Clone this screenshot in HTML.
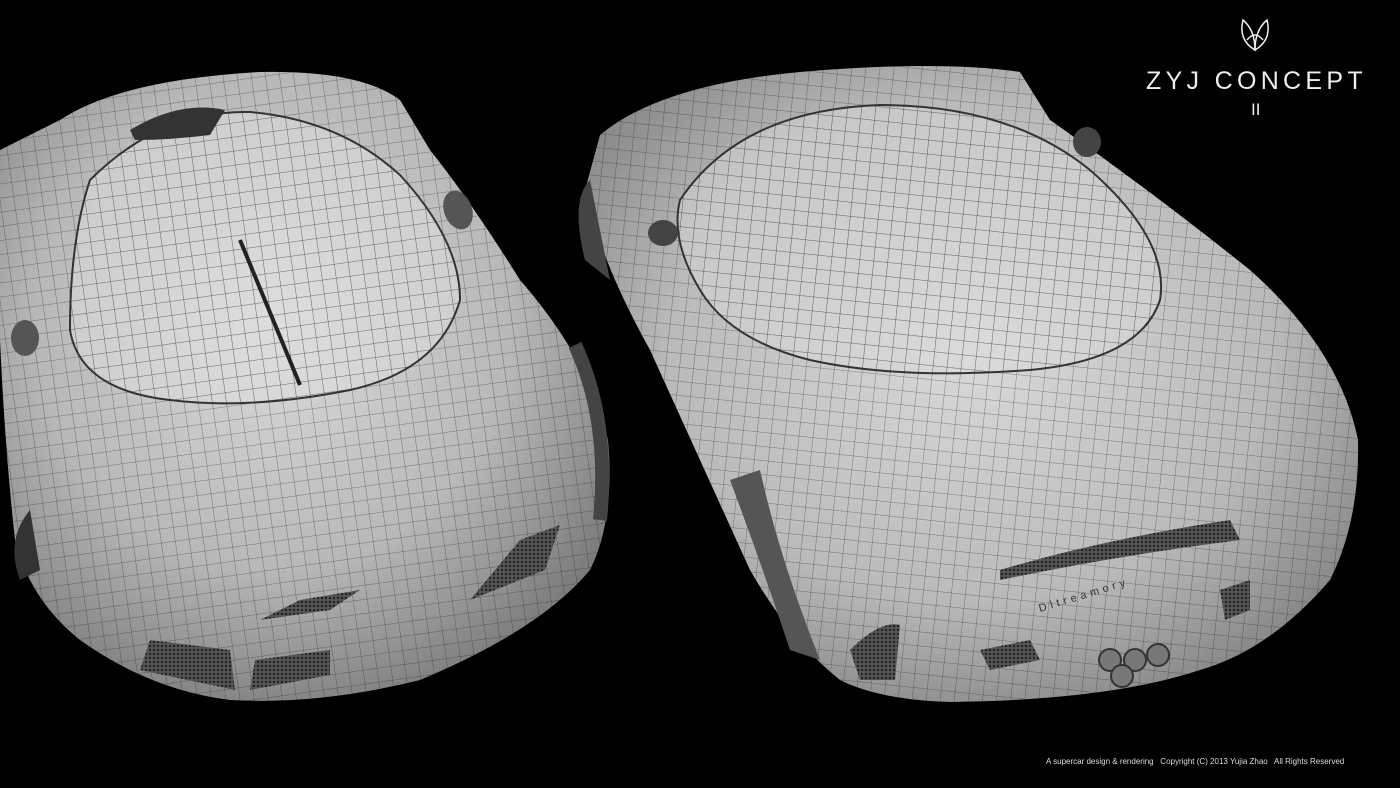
<!DOCTYPE html>
<html><head><meta charset="utf-8"><style>
html,body{margin:0;padding:0;background:#000;}
body{width:1400px;height:788px;overflow:hidden;position:relative;font-family:"Liberation Sans",sans-serif;}
svg{position:absolute;left:0;top:0;}
.t{position:absolute;color:#eee;font-family:"Liberation Sans",sans-serif;font-weight:normal;}
</style></head><body>
<svg width="1400" height="788" viewBox="0 0 1400 788">
<defs>
<pattern id="g" width="14" height="14" patternUnits="userSpaceOnUse" patternTransform="rotate(-8)">
<path d="M0 0H14M0 0V14" stroke="#222" stroke-width="0.8" fill="none" opacity="0.6"/>
</pattern>
<pattern id="g2" width="14" height="14" patternUnits="userSpaceOnUse" patternTransform="rotate(6)">
<path d="M0 0H14M0 0V14" stroke="#222" stroke-width="0.8" fill="none" opacity="0.6"/>
</pattern>
<pattern id="mesh" width="4" height="4" patternUnits="userSpaceOnUse">
<rect width="4" height="4" fill="#555"/><circle cx="2" cy="2" r="1.2" fill="#222"/>
</pattern>
<radialGradient id="s1" cx="0.45" cy="0.4" r="0.65">
<stop offset="0" stop-color="#dcdcdc"/><stop offset="0.6" stop-color="#b8b8b8"/><stop offset="1" stop-color="#7a7a7a"/>
</radialGradient>
<radialGradient id="s2" cx="0.5" cy="0.45" r="0.65">
<stop offset="0" stop-color="#dadada"/><stop offset="0.6" stop-color="#bababa"/><stop offset="1" stop-color="#7a7a7a"/>
</radialGradient>
</defs>
<!-- left car -->
<path d="M0 150 L60 120 Q120 80 260 72 Q360 70 400 100 L430 150 Q470 200 520 280 Q590 360 608 440 Q615 520 590 570 Q540 630 420 680 Q320 705 230 700 Q150 690 80 640 Q30 600 15 540 Q5 450 0 340 Z" fill="url(#s1)"/>
<path d="M0 150 L60 120 Q120 80 260 72 Q360 70 400 100 L430 150 Q470 200 520 280 Q590 360 608 440 Q615 520 590 570 Q540 630 420 680 Q320 705 230 700 Q150 690 80 640 Q30 600 15 540 Q5 450 0 340 Z" fill="url(#g)"/>
<path d="M90 180 Q160 110 250 112 Q340 120 400 175 Q460 240 460 300 Q440 370 350 390 Q250 410 170 400 Q80 390 70 330 Q70 240 90 180Z" fill="#e0e0e0" opacity="0.5"/>
<path d="M90 180 Q160 110 250 112 Q340 120 400 175 Q460 240 460 300 Q440 370 350 390 Q250 410 170 400 Q80 390 70 330 Q70 240 90 180Z" fill="url(#g)" stroke="#333" stroke-width="2"/>
<path d="M240 240 L300 385" stroke="#222" stroke-width="4"/>
<path d="M130 130 Q180 100 225 110 L210 135 Q170 140 135 140Z" fill="#333"/>
<path d="M140 670 L150 640 L230 650 L235 690Z M250 690 L255 660 L330 650 L330 675Z M470 600 L520 540 L560 525 L545 570Z M260 620 L300 600 L360 590 L330 610Z" fill="url(#mesh)"/>
<path d="M30 510 Q5 540 20 580 L40 570Z" fill="#333"/>
<ellipse cx="458" cy="210" rx="14" ry="20" fill="#555" transform="rotate(-20 458 210)"/>
<ellipse cx="25" cy="338" rx="14" ry="18" fill="#555"/>
<path d="M575 345 Q610 420 600 520" stroke="#444" stroke-width="14" fill="none"/>
<!-- right car -->
<path d="M600 135 Q660 85 800 72 Q940 60 1020 72 L1050 120 Q1150 190 1250 270 Q1340 350 1358 440 Q1360 520 1330 580 Q1270 650 1200 670 Q1110 700 950 702 Q880 700 840 680 Q790 640 750 570 Q700 460 650 350 Q600 260 585 190 Z" fill="url(#s2)"/>
<path d="M600 135 Q660 85 800 72 Q940 60 1020 72 L1050 120 Q1150 190 1250 270 Q1340 350 1358 440 Q1360 520 1330 580 Q1270 650 1200 670 Q1110 700 950 702 Q880 700 840 680 Q790 640 750 570 Q700 460 650 350 Q600 260 585 190 Z" fill="url(#g2)"/>
<path d="M680 200 Q740 110 880 105 Q1010 105 1090 170 Q1170 240 1160 300 Q1140 360 1030 370 Q900 380 810 360 Q730 340 700 290 Q670 240 680 200Z" fill="#dcdcdc" opacity="0.45"/>
<path d="M680 200 Q740 110 880 105 Q1010 105 1090 170 Q1170 240 1160 300 Q1140 360 1030 370 Q900 380 810 360 Q730 340 700 290 Q670 240 680 200Z" fill="url(#g2)" stroke="#333" stroke-width="2"/>
<path d="M590 180 Q570 200 585 260 L610 280 Z" fill="#444"/>
<path d="M730 480 Q760 560 790 650 L820 660 Q780 560 760 470Z" fill="#555"/>
<path d="M850 650 Q880 620 900 625 L895 680 L860 680Z M980 650 L1030 640 L1040 660 L990 670Z M1220 590 L1250 580 L1250 610 L1225 620Z M1000 570 Q1100 540 1230 520 L1240 540 Q1120 555 1000 580Z" fill="url(#mesh)"/>
<g fill="#777" stroke="#333" stroke-width="2">
<circle cx="1110" cy="660" r="11"/><circle cx="1135" cy="660" r="11"/><circle cx="1122" cy="676" r="11"/><circle cx="1158" cy="655" r="11"/></g>
<ellipse cx="663" cy="233" rx="15" ry="13" fill="#444"/>
<ellipse cx="1087" cy="142" rx="14" ry="15" fill="#444"/>
<text x="1040" y="612" font-size="11" fill="#333" font-family="Liberation Sans" transform="rotate(-17 1040 612)" letter-spacing="4">Dltreamory</text>
<!-- logo -->
<g stroke="#eee" stroke-width="1.5" fill="none">
<path d="M1255 50 Q1238 40 1243 20 Q1255 30 1255 50Z"/>
<path d="M1255 50 Q1272 40 1267 20 Q1255 30 1255 50Z"/>
<path d="M1247 40 Q1255 30 1263 40"/>
</g>
</svg>
<div class="t" style="left:1146px;top:67px;font-size:25px;letter-spacing:4.3px;">ZYJ CONCEPT</div>
<div class="t" style="left:1251px;top:100px;font-size:17px;">II</div>
<div style="position:absolute;left:1046px;top:757px;font-size:8px;color:#ddd;white-space:nowrap;">A supercar design &amp; rendering &nbsp; Copyright (C) 2013 Yujia Zhao &nbsp; All Rights Reserved</div>
</body></html>
